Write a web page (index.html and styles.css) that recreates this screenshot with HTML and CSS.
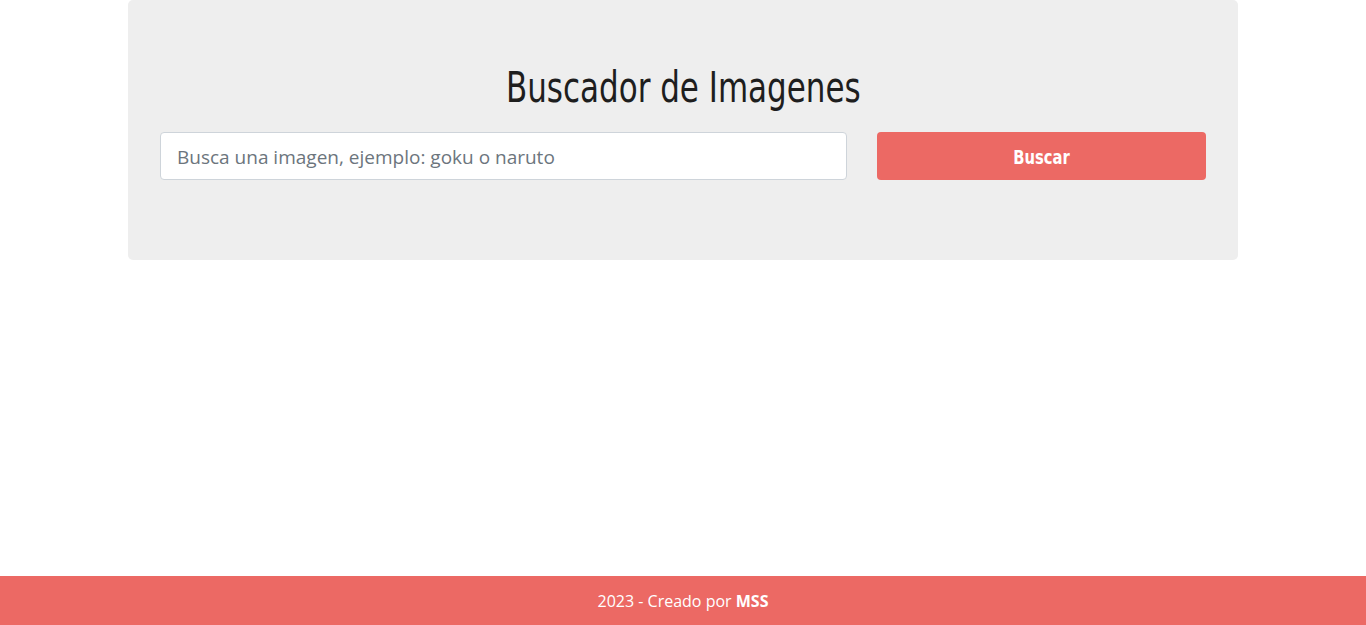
FILE: index.html
```html
<!DOCTYPE html>
<html lang="es">
<head>
<meta charset="utf-8">
<title>Buscador de Imagenes</title>
<link rel="stylesheet" href="styles.css">
</head>
<body>
<main class="container">
  <div class="jumbotron">
    <h1 class="title"><span class="narrow">Buscador de Imagenes</span></h1>
    <form class="search-row">
      <div class="field">
        <input class="search-input" type="text" placeholder="Busca una imagen, ejemplo: goku o naruto">
      </div>
      <div class="action">
        <button class="search-btn" type="submit"><span class="narrow">Buscar</span></button>
      </div>
    </form>
  </div>
</main>
<footer class="footer"><span>2023 - Creado por <strong>MSS</strong></span></footer>
</body>
</html>
```
FILE: styles.css
```css
* { box-sizing: border-box; }
html, body { height: 100%; }
body {
  margin: 0;
  display: flex;
  flex-direction: column;
  min-height: 100vh;
  font-family: "Open Sans", "Noto Sans", sans-serif;
  color: #212529;
  background: #fff;
}
.container {
  width: 1140px;
  margin: 0 auto;
  padding: 0 15px;
  flex: 1;
}
.jumbotron {
  background: #eeeeee;
  border-radius: 5px;
  padding: 64px 32px 80px;
}
.narrow {
  display: inline-block;
  transform: scaleX(0.82);
}
.title {
  margin: 0 0 20px;
  text-align: center;
  font-family: "DejaVu Sans Condensed", "DejaVu Sans", sans-serif;
  font-weight: 400;
  font-size: 42px;
  line-height: 48px;
  color: #1e1e1e;
}
.search-row {
  display: flex;
  gap: 30px;
}
.field { flex: 0 0 687px; }
.action { flex: 1; }
.search-input {
  width: 100%;
  height: 48px;
  border: 1px solid #ced4da;
  border-radius: 4px;
  padding: 2px 16px 0;
  font-family: "Open Sans", "Noto Sans", sans-serif;
  font-size: 19px;
  color: #495057;
  background: #fff;
}
.search-input::placeholder { color: #6c757d; }
.search-btn {
  width: 100%;
  height: 48px;
  border: none;
  border-radius: 4px;
  background: #ec6964;
  color: #fff;
  font-family: "DejaVu Sans Condensed", "DejaVu Sans", sans-serif;
  font-weight: 700;
  font-size: 20px;
  padding: 2px 0 0;
  cursor: pointer;
}
.footer {
  height: 49px;
  background: #ec6964;
  color: #fff;
  display: flex;
  align-items: center;
  justify-content: center;
  font-size: 16px;
}
.footer strong { font-weight: 700; }
```
